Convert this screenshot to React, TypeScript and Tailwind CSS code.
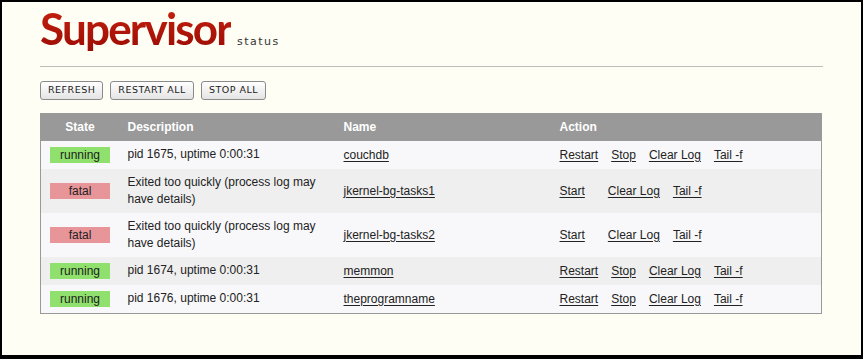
type State = 'running' | 'fatal'

interface Proc {
  state: State
  description: string
  name: string
}

const processes: Proc[] = [
  { state: 'running', description: 'pid 1675, uptime 0:00:31', name: 'couchdb' },
  { state: 'fatal', description: 'Exited too quickly (process log may have details)', name: 'jkernel-bg-tasks1' },
  { state: 'fatal', description: 'Exited too quickly (process log may have details)', name: 'jkernel-bg-tasks2' },
  { state: 'running', description: 'pid 1674, uptime 0:00:31', name: 'memmon' },
  { state: 'running', description: 'pid 1676, uptime 0:00:31', name: 'theprogramname' },
]

function TopButton({ label }: { label: string }) {
  return (
    <button className="h-[19px] rounded-[3px] border border-[#8a8a8a] bg-gradient-to-b from-white to-[#e4e4e4] px-[7px] text-[9.5px] tracking-[0.5px] text-[#222] [font-family:'DejaVu_Sans',sans-serif]">
      {label}
    </button>
  )
}

function Badge({ state }: { state: State }) {
  const color = state === 'running' ? 'bg-[#8fe06c]' : 'bg-[#e8959a]'
  return (
    <span className={`${color} block h-[16px] w-[60px] text-center text-[12px] leading-[16px] text-[#222]`}>
      {state}
    </span>
  )
}

function Link({ children, className = '' }: { children: string; className?: string }) {
  return <a className={`text-[#222] underline underline-offset-[2px] ${className}`}>{children}</a>
}

export default function App() {
  return (
    <div className="bg-black pt-[2px] pr-[2px] pb-[4px] pl-[2px]">
      <div className="h-[353px] bg-[#fefef4] px-[38px] pt-[3px] [font-family:'Liberation_Sans',Arial,sans-serif]">
        {/* Kop */}
        <div className="flex items-baseline gap-[6px] border-b border-[#bdbdbd] pb-[15px]">
          <h1 className="bg-gradient-to-b from-[#c8230f] to-[#9c0a05] bg-clip-text text-[44px] leading-[46px] font-bold tracking-[-1.8px] text-transparent [font-family:Lato,sans-serif]">
            Supervisor
          </h1>
          <span className="text-[11px] tracking-[1.5px] text-[#333] [font-family:'DejaVu_Sans',sans-serif]">
            status
          </span>
        </div>

        <div className="mt-[14px] flex gap-[7px]">
          <TopButton label="REFRESH" />
          <TopButton label="RESTART ALL" />
          <TopButton label="STOP ALL" />
        </div>

        {/* Procestabel */}
        <table className="mt-[13px] w-[782px] table-fixed border-collapse border border-[#999] text-[12px] text-[#222]">
          <colgroup>
            <col className="w-[87px]" />
            <col className="w-[216px]" />
            <col className="w-[216px]" />
            <col />
          </colgroup>
          <thead>
            <tr className="h-[27px] bg-[#999] text-left font-bold text-white">
              <th className="pl-[9px]">
                <span className="block w-[60px] text-center">State</span>
              </th>
              <th>Description</th>
              <th>Name</th>
              <th>Action</th>
            </tr>
          </thead>
          <tbody>
            {processes.map((p, i) => (
              <tr key={p.name} className={i % 2 === 0 ? 'bg-[#f8f8fa]' : 'bg-[#efefef]'}>
                <td className="py-[5px] pl-[9px] align-middle">
                  <Badge state={p.state} />
                </td>
                <td className="py-[5px] pr-[14px] leading-[17px]">{p.description}</td>
                <td className="py-[5px]">
                  <Link>{p.name}</Link>
                </td>
                <td className="py-[5px]">
                  {p.state === 'running' ? (
                    <>
                      <Link className="mr-[13px]">Restart</Link>
                      <Link className="mr-[13px]">Stop</Link>
                      <Link className="mr-[13px]">Clear Log</Link>
                      <Link>Tail -f</Link>
                    </>
                  ) : (
                    <>
                      <Link className="mr-[23px]">Start</Link>
                      <Link className="mr-[13px]">Clear Log</Link>
                      <Link>Tail -f</Link>
                    </>
                  )}
                </td>
              </tr>
            ))}
          </tbody>
        </table>
      </div>
    </div>
  )
}
